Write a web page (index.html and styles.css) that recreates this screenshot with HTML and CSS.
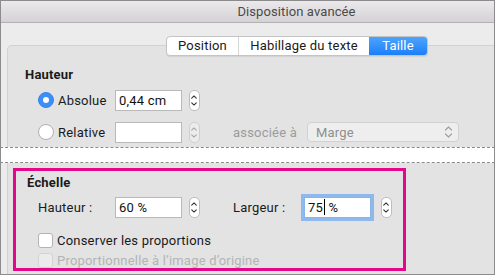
FILE: index.html
```html
<!DOCTYPE html>
<html lang="fr">
<head>
<meta charset="utf-8">
<title>Disposition avancée</title>
<link rel="stylesheet" href="styles.css">
</head>
<body>
<div class="window">
  <div class="titlebar"><span class="title">Disposition avancée</span></div>
  <div class="content">
    <div class="tabs">
      <div class="tab tab-pos">Position</div>
      <div class="tab tab-hab">Habillage du texte</div>
      <div class="tab tab-tai active">Taille</div>
    </div>
    <div class="box box-top">
      <div class="heading">Hauteur</div>
      <div class="row row-first">
        <div class="choice"><span class="radio on"></span><span>Absolue</span></div>
        <div class="field">0,44 cm</div>
        <div class="stepper">
          <svg width="11" height="21" viewBox="0 0 11 21"><path d="M3 8 L5.5 5.5 L8 8 M3 13 L5.5 15.5 L8 13" fill="none" stroke="#333" stroke-width="1.2" stroke-linecap="round" stroke-linejoin="round"/></svg>
        </div>
      </div>
      <div class="row row-second">
        <div class="choice"><span class="radio"></span><span>Relative</span></div>
        <div class="field"></div>
        <div class="stepper disabled">
          <svg width="11" height="21" viewBox="0 0 11 21"><path d="M3 8 L5.5 5.5 L8 8 M3 13 L5.5 15.5 L8 13" fill="none" stroke="#a8a8a8" stroke-width="1.2" stroke-linecap="round" stroke-linejoin="round"/></svg>
        </div>
        <span class="assoc">associée à</span>
        <div class="select">
          <span>Marge</span>
          <svg width="9" height="14" viewBox="0 0 9 14"><path d="M1.5 5 L4.5 2 L7.5 5 M1.5 9 L4.5 12 L7.5 9" fill="none" stroke="#a0a0a0" stroke-width="1.2" stroke-linecap="round" stroke-linejoin="round"/></svg>
        </div>
      </div>
    </div>
    <div class="tear"></div>
    <div class="box box-bottom">
      <div class="highlight">
        <div class="heading">Échelle</div>
        <div class="row scale-row">
          <span class="lbl lbl-h">Hauteur :</span>
          <div class="field">60 %</div>
          <div class="stepper">
            <svg width="11" height="21" viewBox="0 0 11 21"><path d="M3 8 L5.5 5.5 L8 8 M3 13 L5.5 15.5 L8 13" fill="none" stroke="#333" stroke-width="1.2" stroke-linecap="round" stroke-linejoin="round"/></svg>
          </div>
          <span class="lbl lbl-w">Largeur :</span>
          <div class="field focus">75<span class="caret"></span>&nbsp;%</div>
          <div class="stepper stepper-w">
            <svg width="11" height="21" viewBox="0 0 11 21"><path d="M3 8 L5.5 5.5 L8 8 M3 13 L5.5 15.5 L8 13" fill="none" stroke="#333" stroke-width="1.2" stroke-linecap="round" stroke-linejoin="round"/></svg>
          </div>
        </div>
        <div class="check check-first"><span class="box-c"></span><span>Conserver les proportions</span></div>
        <div class="check disabled"><span class="box-c"></span><span>Proportionnelle à l’image d’origine</span></div>
      </div>
    </div>
  </div>
</div>
</body>
</html>
```

FILE: styles.css
```css
* { box-sizing: border-box; }
html, body { margin: 0; padding: 0; background: #ffffff; }
body {
  font-family: "Roboto", "Liberation Sans", sans-serif;
  font-size: 13px;
  letter-spacing: 0.2px;
  color: #1a1a1a;
}
.window {
  width: 495px;
  height: 275px;
  border: 1px solid #8c8c8c;
  background: #ececec;
  overflow: hidden;
}
.titlebar {
  height: 22px;
  border-bottom: 1px solid #b3b1b3;
  background: linear-gradient(#ebe9eb, #d4d2d4);
  display: flex;
  align-items: center;
  justify-content: center;
  padding-left: 98px;
}
.title { color: #4a4a4a; font-size: 13px; letter-spacing: 0.1px; }
.content { padding-top: 13px; }
.tabs {
  position: relative;
  z-index: 2;
  display: flex;
  margin-left: 165px;
  width: max-content;
  height: 20px;
  border: 1px solid #c4c4c4;
  border-radius: 4px;
  background: #ffffff;
  box-shadow: 0 1px 1px rgba(0,0,0,0.08);
  overflow: hidden;
}
.tab {
  display: flex;
  align-items: center;
  justify-content: center;
  color: #1a1a1a;
  line-height: 18px;
}
.tab-pos { width: 71px; }
.tab-hab { width: 131px; border-left: 1px solid #d6d6d6; }
.tab-tai { width: 58px; }
.tab.active {
  background: linear-gradient(#4ea3fd, #1c7ff9);
  color: #ffffff;
}
.box {
  margin-left: 6px;
  margin-right: -20px;
  background: #e3e3e3;
  border: 1px solid #d2d2d2;
}
.box-top {
  margin-top: -11px;
  border-bottom: none;
  border-radius: 5px 5px 0 0;
  padding: 21px 0 5px 17px;
  height: 102px;
}
.heading { font-weight: 700; line-height: 16px; height: 16px; }
.row { display: flex; align-items: center; height: 22px; }
.row-first { margin-top: 6px; padding-left: 13px; }
.row-second { margin-top: 10px; padding-left: 13px; }
.choice { display: flex; align-items: center; gap: 4px; width: 77px; }
.radio {
  width: 16px; height: 16px; border-radius: 50%;
  background: #ffffff; border: 1px solid #b0b0b0;
  display: flex; align-items: center; justify-content: center;
}
.radio.on { background: #3d8ff7; border-color: #3584ee; }
.radio.on::after {
  content: ""; width: 6px; height: 6px; border-radius: 50%; background: #ffffff;
}
.field {
  width: 67px; height: 21px;
  background: #ffffff;
  border: 1px solid #b9b9b9;
  padding-left: 3px;
  line-height: 19px;
  color: #111;
  white-space: nowrap;
}
.stepper {
  margin-left: 7px;
  width: 11px; height: 21px;
  border: 1px solid #bdbdbd;
  border-radius: 5px;
  background: #ffffff;
  display: flex;
}
.stepper svg { display: block; margin: -1px 0 0 -1px; }
.stepper.disabled { background: #ececec; border-color: #cfcfcf; }
.assoc { margin-left: 33px; color: #9b9b9b; }
.select {
  margin-left: 10px;
  width: 152px; height: 20px;
  background: #eeeeee;
  border: 1px solid #d1d1d1;
  border-radius: 4px;
  display: flex; align-items: center; justify-content: space-between;
  padding: 0 5px 0 8px;
  color: #8f8f8f;
}
.tear {
  height: 16px;
  margin-left: -1px;
  margin-right: -1px;
  background: #ffffff;
  border-top: 1px dashed #8a8a8a;
  border-bottom: 1px dashed #8a8a8a;
}
.box-bottom {
  border-top: none;
  height: 112px;
  padding: 5px 0 0 5px;
}
.highlight {
  width: 393px; height: 103px;
  border: 3px solid #e5078a;
  padding: 4px 0 0 11px;
}
.scale-row { margin-top: 6px; padding-left: 11px; height: 21px; }
.lbl { display: block; }
.lbl-h { width: 77px; }
.lbl-w { width: 71px; margin-left: 33px; }
.field.focus {
  border-color: #8ab4e6;
  box-shadow: 0 0 0 3px #8fb8ec;
}
.caret { display: inline-block; width: 1px; height: 16px; background: #000; margin-left: 1px; vertical-align: -3px; }
.stepper-w { margin-left: 10px; }
.check { display: flex; align-items: center; gap: 4px; height: 16px; padding-left: 11px; }
.check-first { margin-top: 14px; }
.check.disabled { margin-top: 4px; color: #b4b4b4; }
.box-c {
  width: 15px; height: 15px;
  background: #ffffff;
  border: 1px solid #b3b3b3;
  border-radius: 3px;
}
.check.disabled .box-c { background: #ebebeb; border-color: #d3d3d3; }
```
